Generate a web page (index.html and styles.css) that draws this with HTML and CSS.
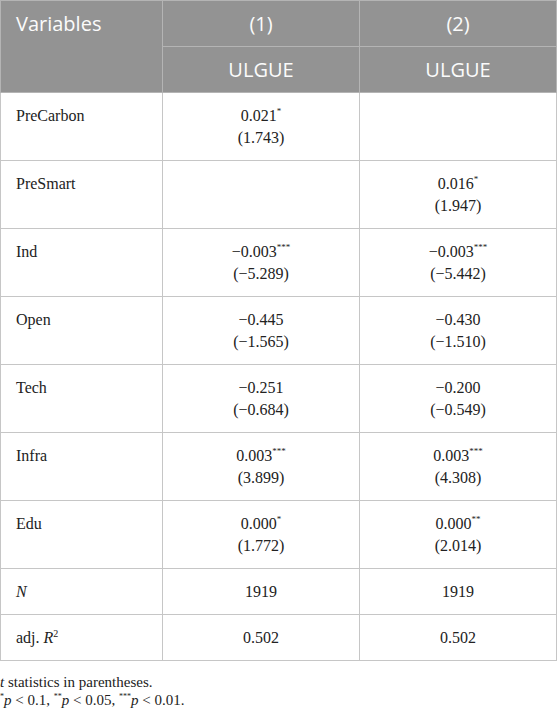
FILE: index.html
```html
<!DOCTYPE html>
<html>
<head>
<meta charset="utf-8">
<link rel="stylesheet" href="styles.css">
</head>
<body>
<table class="reg">
  <thead>
    <tr><th rowspan="2" class="var">Variables</th><th>(1)</th><th>(2)</th></tr>
    <tr><th>ULGUE</th><th>ULGUE</th></tr>
  </thead>
  <tbody>
    <tr><td class="var">PreCarbon</td><td>0.021<sup>*</sup><br>(1.743)</td><td></td></tr>
    <tr><td class="var">PreSmart</td><td></td><td>0.016<sup>*</sup><br>(1.947)</td></tr>
    <tr><td class="var">Ind</td><td>&minus;0.003<sup>***</sup><br>(&minus;5.289)</td><td>&minus;0.003<sup>***</sup><br>(&minus;5.442)</td></tr>
    <tr><td class="var">Open</td><td>&minus;0.445<br>(&minus;1.565)</td><td>&minus;0.430<br>(&minus;1.510)</td></tr>
    <tr><td class="var">Tech</td><td>&minus;0.251<br>(&minus;0.684)</td><td>&minus;0.200<br>(&minus;0.549)</td></tr>
    <tr><td class="var">Infra</td><td>0.003<sup>***</sup><br>(3.899)</td><td>0.003<sup>***</sup><br>(4.308)</td></tr>
    <tr><td class="var">Edu</td><td>0.000<sup>*</sup><br>(1.772)</td><td>0.000<sup>**</sup><br>(2.014)</td></tr>
    <tr><td class="var"><i>N</i></td><td>1919</td><td>1919</td></tr>
    <tr><td class="var">adj. <i>R</i><sup class="pow">2</sup></td><td>0.502</td><td>0.502</td></tr>
  </tbody>
</table>
<div class="notes">
  <p><i>t</i> statistics in parentheses.</p>
  <p><sup>*</sup><i>p</i> &lt; 0.1, <sup>**</sup><i>p</i> &lt; 0.05, <sup>***</sup><i>p</i> &lt; 0.01.</p>
</div>
</body>
</html>
```
FILE: styles.css
```css
html, body {
  margin: 0;
  padding: 0;
  background: #ffffff;
}
body {
  font-family: "Liberation Serif", "Times New Roman", serif;
  color: #222222;
}
.reg {
  border-collapse: collapse;
  width: 557px;
  table-layout: fixed;
}
.reg th, .reg td {
  padding: 12px 15px 11px;
  line-height: 22px;
  vertical-align: top;
  text-align: center;
}
.reg th {
  background: #939393;
  color: #fbfbfb;
  font-family: "Open Sans", "Liberation Sans", sans-serif;
  font-weight: 400;
  font-size: 20px;
  border: 1px solid #b4b4b4;
}
.reg td {
  font-size: 16px;
  border: 1px solid #c6c6c6;
}
.reg .var {
  text-align: left;
}
.reg th.var {
  width: 131px;
}
.reg sup {
  font-size: 9px;
  line-height: 0;
  vertical-align: 7px;
}
.reg sup.pow {
  font-size: 10px;
  vertical-align: 6px;
}
.notes {
  margin-top: 12px;
  font-size: 15px;
  line-height: 18px;
}
.notes p {
  margin: 0;
}
.notes sup {
  font-size: 8px;
  line-height: 0;
  vertical-align: 6px;
}
```
